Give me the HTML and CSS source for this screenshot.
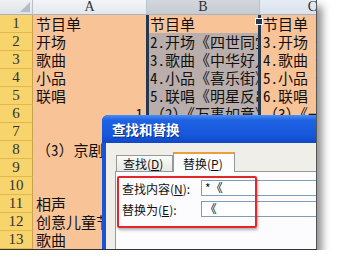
FILE: index.html
```html
<!DOCTYPE html>
<html lang="zh-CN">
<head>
    <meta charset="UTF-8">
    <title>查找和替换</title>
    <link rel="stylesheet" href="styles.css">
</head>
<body>
    <div class="shot">
        <div class="sheet">
            <div class="corner"><span class="corner-tri"></span></div>
            <div class="col-head">A</div>
            <div class="col-head col-b">B</div>
            <div class="col-head col-c">C</div>

            <div class="row-head">1</div>
            <div class="cell">节目单</div>
            <div class="cell">节目单</div>
            <div class="cell">节目单</div>

            <div class="row-head">2</div>
            <div class="cell">开场</div>
            <div class="cell sel">2.开场《四世同堂》</div>
            <div class="cell">3.开场《一》</div>

            <div class="row-head">3</div>
            <div class="cell">歌曲</div>
            <div class="cell sel">3.歌曲《中华好儿孙》</div>
            <div class="cell">4.歌曲《一》</div>

            <div class="row-head">4</div>
            <div class="cell">小品</div>
            <div class="cell sel">4.小品《喜乐街》</div>
            <div class="cell">5.小品《一》</div>

            <div class="row-head">5</div>
            <div class="cell">联唱</div>
            <div class="cell sel">5.联唱《明星反串》</div>
            <div class="cell">6.联唱《一》</div>

            <div class="row-head">6</div>
            <div class="cell right">1</div>
            <div class="cell sel">（2）《万事如意》</div>
            <div class="cell">（3）《一》</div>

            <div class="row-head">7</div>
            <div class="cell"></div>
            <div class="cell sel"></div>
            <div class="cell"></div>

            <div class="row-head">8</div>
            <div class="cell">（3）京剧</div>
            <div class="cell sel"></div>
            <div class="cell"></div>

            <div class="row-head">9</div>
            <div class="cell"></div>
            <div class="cell sel"></div>
            <div class="cell"></div>

            <div class="row-head">10</div>
            <div class="cell"></div>
            <div class="cell sel"></div>
            <div class="cell"></div>

            <div class="row-head">11</div>
            <div class="cell">相声</div>
            <div class="cell sel"></div>
            <div class="cell"></div>

            <div class="row-head">12</div>
            <div class="cell">创意儿童节目</div>
            <div class="cell sel"></div>
            <div class="cell"></div>

            <div class="row-head">13</div>
            <div class="cell">歌曲</div>
            <div class="cell sel"></div>
            <div class="cell"></div>
        </div>

        <div class="selection"><span class="handle"></span></div>

        <div class="dialog">
            <div class="titlebar">查找和替换</div>
            <div class="dialog-body">
                <div class="tabs">
                    <div class="tab">查找(<u>D</u>)</div>
                    <div class="tab active">替换(<u>P</u>)</div>
                </div>
                <div class="panel">
                    <div class="field">
                        <label>查找内容(<u>N</u>):</label>
                        <div class="input">*《</div>
                    </div>
                    <div class="field">
                        <label>替换为(<u>E</u>):</label>
                        <div class="input">《</div>
                    </div>
                </div>
            </div>
        </div>

        <div class="mark"></div>
    </div>
</body>
</html>
```

FILE: styles.css
```css
body {
    margin: 0;
    background-color: #fff;
    font-family: "Noto Sans Mono CJK SC", "Noto Sans CJK SC", monospace;
}
.shot {
    position: relative;
    width: 316px;
    height: 249px;
    overflow: hidden;
    border-right: 1px solid #555;
    border-bottom: 1px solid #333;
    box-shadow: 5px 6px 8px rgba(0, 0, 0, 0.45);
}
.sheet {
    display: grid;
    grid-template-columns: 33px 114px 113px 120px;
    grid-template-rows: 15px repeat(13, 18px);
    background-color: #f9c398;
}
.corner {
    position: relative;
    background: linear-gradient(#eef0f3, #dfe3e8);
    border-right: 1px solid #b9c0c9;
    border-bottom: 1px solid #a9b3bf;
}
.corner-tri {
    position: absolute;
    right: 2px;
    bottom: 2px;
    width: 0;
    height: 0;
    border-left: 10px solid transparent;
    border-bottom: 10px solid #b6bcc5;
}
.col-head {
    background: linear-gradient(#f3f5f7, #e3e7ec);
    border-right: 1px solid #b9c3cf;
    border-bottom: 1px solid #a9b3bf;
    font-family: "Liberation Serif", serif;
    font-size: 14px;
    line-height: 14px;
    text-align: center;
    color: #333;
}
.col-b {
    background: linear-gradient(#d3d7dd, #c6cbd2);
}
.col-c {
    background: linear-gradient(#e6ecf4, #d9e2ee);
    text-align: right;
    padding-right: 62px;
}
.row-head {
    background-color: #f8d46c;
    border-right: 1px solid #c9a24b;
    border-bottom: 1px solid #e3b650;
    font-family: "Liberation Serif", serif;
    font-size: 15px;
    line-height: 17px;
    text-align: center;
    color: #333;
}
.cell {
    font-size: 15px;
    line-height: 18px;
    padding-left: 3px;
    white-space: nowrap;
    overflow: hidden;
    color: #111;
}
.cell.sel {
    background-color: #b9aeab;
}
.cell.right {
    text-align: right;
    padding-right: 4px;
}
.selection {
    position: absolute;
    left: 146px;
    top: 15px;
    width: 109px;
    height: 240px;
    border-left: 3px solid #23384e;
    border-right: 3px solid #23384e;
}
.handle {
    position: absolute;
    right: -5px;
    top: 3px;
    width: 6px;
    height: 5px;
    background-color: #23384e;
    border: 1px solid #fff;
}
.dialog {
    position: absolute;
    left: 102px;
    top: 115px;
    width: 240px;
    height: 160px;
    display: flex;
    flex-direction: column;
    border-top-left-radius: 6px;
    overflow: hidden;
    background-color: #1853db;
}
.titlebar {
    height: 28px;
    padding-left: 10px;
    background: linear-gradient(#4a8ef5 0%, #1f63e4 18%, #1757dc 70%, #0f48c8 100%);
    color: #fff;
    font-family: "Noto Sans CJK SC", sans-serif;
    font-weight: bold;
    font-size: 13.5px;
    line-height: 29px;
    text-shadow: 1px 1px 0 #0b2f8a;
}
.dialog-body {
    flex: 1;
    margin-left: 4px;
    padding: 8px 0 0 9px;
    background-color: #efeee8;
}
.tabs {
    display: flex;
    align-items: flex-end;
    padding-left: 1px;
    height: 20px;
    position: relative;
    z-index: 1;
}
.tab {
    height: 15px;
    width: 49px;
    padding-left: 6px;
    border: 1px solid #919b9c;
    border-bottom: none;
    background: linear-gradient(#fbfbf9, #e8e7e0);
    font-family: "Noto Sans CJK SC", sans-serif;
    font-size: 12px;
    line-height: 15px;
    color: #111;
}
.tab.active {
    height: 18px;
    width: 51px;
    padding-left: 9px;
    margin-bottom: -1px;
    border-top: 2px solid #e8a13a;
    background-color: #fcfcfe;
    background-image: none;
    line-height: 19px;
}
.panel {
    display: flex;
    flex-direction: column;
    gap: 5px;
    padding: 8px 0 20px 6px;
    height: 100px;
    border: 1px solid #919b9c;
    border-right: none;
    background-color: #fcfcfe;
}
.field {
    display: flex;
    align-items: center;
    height: 16px;
}
.field label {
    width: 81px;
    font-family: "Noto Sans CJK SC", sans-serif;
    font-size: 12px;
    color: #111;
}
.input {
    width: 140px;
    height: 14px;
    padding-left: 3px;
    border: 1px solid #7f9db9;
    background-color: #fff;
    font-size: 12px;
    line-height: 14px;
    color: #000;
}
.mark {
    position: absolute;
    left: 117px;
    top: 176px;
    width: 136px;
    height: 48px;
    border: 2px solid #e2262a;
    border-radius: 2px;
    box-shadow: 1px 2px 3px rgba(0, 0, 0, 0.3);
}
```
